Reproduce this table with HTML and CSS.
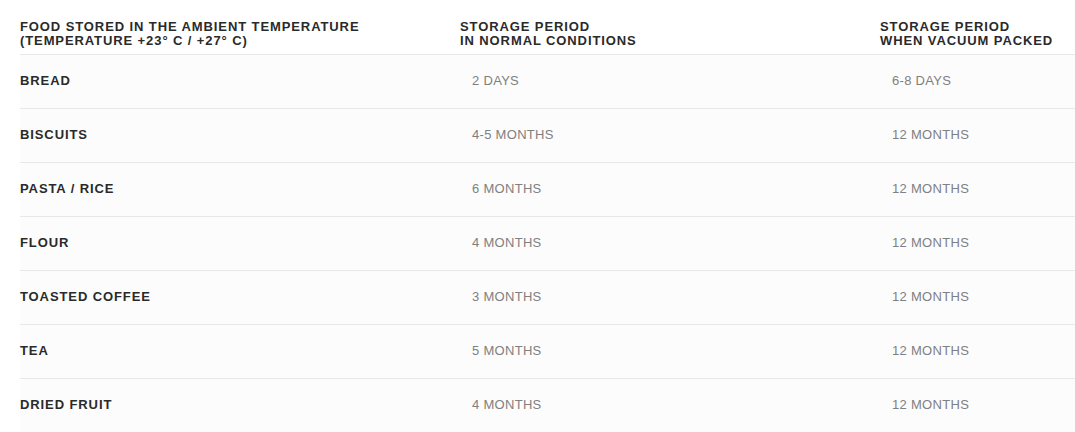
FILE: index.html
```html
<!DOCTYPE html>
<html>
<head>
<meta charset="utf-8">
<link rel="stylesheet" href="styles.css">
</head>
<body>
<table class="storage">
  <thead>
    <tr>
      <th class="c1">FOOD STORED IN THE AMBIENT TEMPERATURE<br>(TEMPERATURE +23° C / +27° C)</th>
      <th class="c2">STORAGE PERIOD<br>IN NORMAL CONDITIONS</th>
      <th class="c3">STORAGE PERIOD<br>WHEN VACUUM PACKED</th>
    </tr>
  </thead>
  <tbody>
    <tr><td class="food">BREAD</td><td class="val">2 DAYS</td><td class="val">6-8 DAYS</td></tr>
    <tr><td class="food">BISCUITS</td><td class="val">4-5 MONTHS</td><td class="val">12 MONTHS</td></tr>
    <tr><td class="food">PASTA / RICE</td><td class="val">6 MONTHS</td><td class="val">12 MONTHS</td></tr>
    <tr><td class="food">FLOUR</td><td class="val">4 MONTHS</td><td class="val">12 MONTHS</td></tr>
    <tr><td class="food">TOASTED COFFEE</td><td class="val">3 MONTHS</td><td class="val">12 MONTHS</td></tr>
    <tr><td class="food">TEA</td><td class="val">5 MONTHS</td><td class="val">12 MONTHS</td></tr>
    <tr><td class="food">DRIED FRUIT</td><td class="val">4 MONTHS</td><td class="val">12 MONTHS</td></tr>
  </tbody>
</table>
</body>
</html>
```

FILE: styles.css
```css
html, body {
  margin: 0;
  padding: 0;
  background: #ffffff;
}
body {
  padding-left: 20px;
  font-family: "Liberation Sans", Arial, sans-serif;
  overflow: hidden;
}
.storage {
  border-collapse: collapse;
  width: 1055px;
  table-layout: fixed;
}
.storage th {
  text-align: left;
  font-weight: bold;
  font-size: 13px;
  line-height: 14px;
  letter-spacing: 0.9px;
  color: #2a2a2a;
  padding: 20px 0 6px 0;
  vertical-align: bottom;
  border-bottom: 1px solid #e8e8e8;
}
.storage th.c1 { width: 440px; }
.storage th.c2 { width: 420px; }
.storage th.c3 { width: 195px; }
.storage td {
  height: 51px;
  padding: 0 0 2px 0;
  font-size: 13px;
  line-height: 14px;
  vertical-align: middle;
  background: #fcfcfc;
  border-bottom: 1px solid #e8e8e8;
}
.storage td.food {
  font-weight: bold;
  letter-spacing: 0.9px;
  color: #2a2a2a;
}
.storage td.val {
  color: #808080;
  letter-spacing: 0.3px;
  padding-left: 12px;
}
```
